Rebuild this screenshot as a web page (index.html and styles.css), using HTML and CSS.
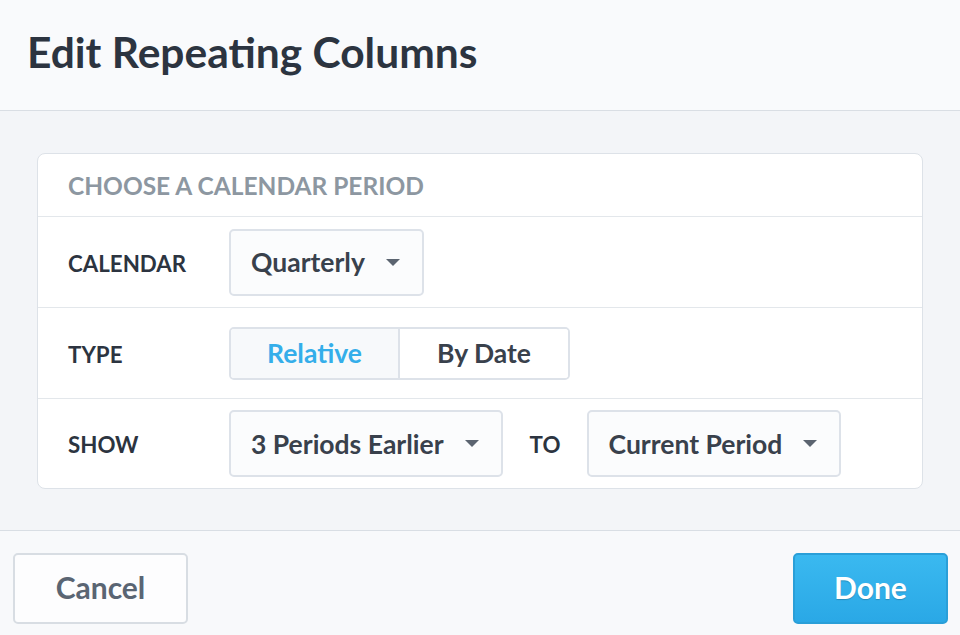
FILE: index.html
```html
<!DOCTYPE html>
<html lang="en">
    <head>
        <meta charset="UTF-8">
        <title>Edit Repeating Columns</title>
        <link rel="stylesheet" href="styles.css">
    </head>
    <body>
    <div class="dialog">
        <div class="dialog-head">
            <h1>Edit Repeating Columns</h1>
        </div>
        <div class="dialog-body">
            <div class="card">
                <div class="card-title">CHOOSE A CALENDAR PERIOD</div>
                <div class="row">
                    <span class="label">CALENDAR</span>
                    <div class="select">Quarterly<i class="caret"></i></div>
                </div>
                <div class="row">
                    <span class="label">TYPE</span>
                    <div class="toggle">
                        <span class="on">Relative</span>
                        <span>By Date</span>
                    </div>
                </div>
                <div class="row">
                    <span class="label">SHOW</span>
                    <div class="select">3 Periods Earlier<i class="caret"></i></div>
                    <span class="to">TO</span>
                    <div class="select">Current Period<i class="caret"></i></div>
                </div>
            </div>
        </div>
        <div class="dialog-foot">
            <button class="btn">Cancel</button>
            <button class="btn primary">Done</button>
        </div>
    </div>
    </body>
</html>
```
FILE: styles.css
```css
*{
    margin:0;
    padding:0;
    box-sizing:border-box;
}
body{
    font-family:"Source Sans Pro", Lato, "Open Sans", sans-serif;
    color:#2c3440;
    background:#f8f9fb;
}
.dialog{
    width:960px;
    height:635px;
    display:flex;
    flex-direction:column;
}
.dialog-head{
    height:111px;
    padding-left:27px;
    display:flex;
    align-items:center;
    background:#f9fafc;
    border-bottom:1px solid #d9dee4;
}
.dialog-head h1{
    font-size:42.5px;
    font-weight:700;
    color:#2c3440;
    padding-bottom:7px;
}
.dialog-body{
    height:420px;
    padding:42px 37px 0;
    background:#f3f5f8;
    border-bottom:1px solid #d9dee4;
}
.card{
    background:#fff;
    border:1px solid #dde2e8;
    border-radius:8px;
}
.card-title{
    height:63px;
    padding-left:30px;
    display:flex;
    align-items:center;
    font-size:24.5px;
    font-weight:700;
    color:#8d97a1;
    border-bottom:1px solid #e3e7eb;
}
.row{
    height:91px;
    padding-left:30px;
    display:flex;
    align-items:center;
    border-bottom:1px solid #e3e7eb;
}
.row:last-child{
    height:89px;
    border-bottom:none;
}
.label{
    width:161px;
    padding-top:2px;
    font-size:22.3px;
    font-weight:700;
    color:#2c3440;
}
.select{
    height:67px;
    padding:0 22px 0 20px;
    display:flex;
    align-items:center;
    font-size:26.5px;
    font-weight:700;
    color:#39414c;
    background:#fbfcfd;
    border:2px solid #dde2e9;
    border-radius:5px;
}
.caret{
    margin-left:21px;
    border-left:7px solid transparent;
    border-right:7px solid transparent;
    border-top:7px solid #5b6470;
}
.to{
    width:84px;
    padding-left:27px;
    padding-top:2px;
    font-size:22.3px;
    font-weight:700;
}
.toggle{
    display:flex;
    height:53px;
    border:2px solid #dde2e9;
    border-radius:5px;
    overflow:hidden;
}
.toggle span{
    width:168px;
    display:flex;
    align-items:center;
    justify-content:center;
    font-size:26.5px;
    font-weight:700;
    color:#39414c;
    background:#fff;
}
.toggle .on{
    width:169px;
    color:#34aeea;
    background:#f7f9fb;
    border-right:2px solid #dde2e9;
}
.dialog-foot{
    flex:1;
    padding:22px 12px 0 13px;
    display:flex;
    align-items:flex-start;
    justify-content:space-between;
    background:#f8f9fb;
}
.btn{
    height:71px;
    width:175px;
    padding-bottom:3px;
    font-family:inherit;
    font-size:30px;
    font-weight:700;
    color:#5a6573;
    background:#fdfdfe;
    border:2px solid #d8dde3;
    border-radius:5px;
}
.btn.primary{
    width:155px;
    color:#fff;
    text-shadow:0 1px 1px rgba(0,0,0,0.2);
    background:linear-gradient(#3ab9f0, #2aa8e6);
    border-color:#2a9fd8;
}
```
